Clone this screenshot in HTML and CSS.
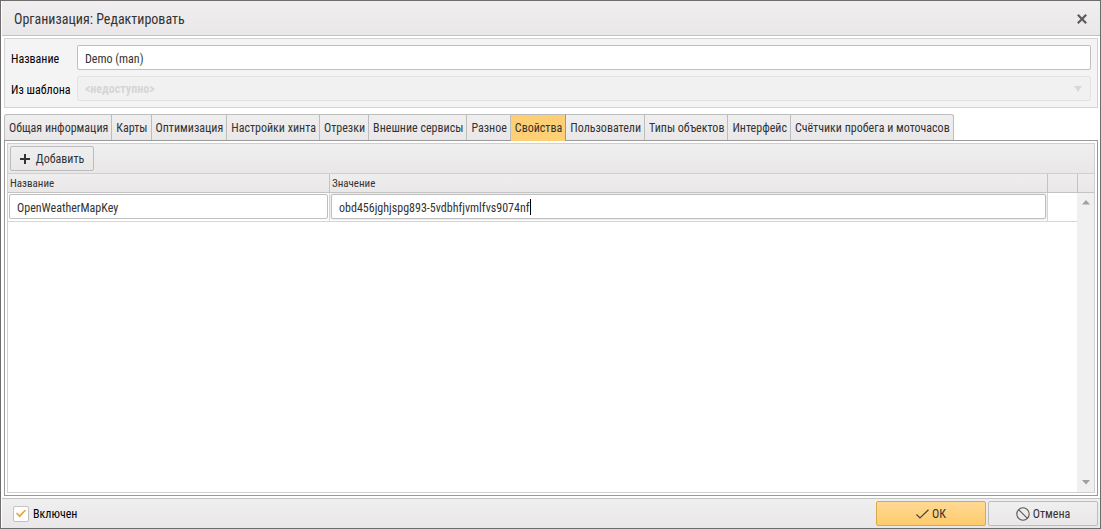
FILE: index.html
```html
<!DOCTYPE html>
<html lang="ru">
<head>
<meta charset="utf-8">
<title>Организация: Редактировать</title>
<link rel="stylesheet" href="styles.css">
</head>
<body>
<form class="dialog">
  <header class="titlebar">
    <h1 class="title">Организация: Редактировать</h1>
    <button type="button" class="close" aria-label="Закрыть">
      <svg width="10" height="10" viewBox="0 0 10 10"><path d="M.8 .8L9.2 9.2M9.2 .8L.8 9.2" stroke="#5c5c5c" stroke-width="2.2" fill="none"/></svg>
    </button>
  </header>
  <main class="content">
    <section class="fields">
      <label for="name">Название</label>
      <input id="name" class="input" type="text" value="Demo (man)">
      <label for="template">Из шаблона</label>
      <div class="select-wrap">
        <select id="template" class="input select" disabled><option>&lt;недоступно&gt;</option></select>
        <svg class="select-arrow" width="8" height="6" viewBox="0 0 8 6"><path d="M0 0H8L4 6Z" fill="#d8d8d8"/></svg>
      </div>
    </section>
    <nav class="tabs" role="tablist">
      <button type="button" class="tab" role="tab">Общая информация</button>
      <button type="button" class="tab" role="tab">Карты</button>
      <button type="button" class="tab" role="tab">Оптимизация</button>
      <button type="button" class="tab" role="tab">Настройки хинта</button>
      <button type="button" class="tab" role="tab">Отрезки</button>
      <button type="button" class="tab" role="tab">Внешние сервисы</button>
      <button type="button" class="tab" role="tab">Разное</button>
      <button type="button" class="tab active" role="tab" aria-selected="true">Свойства</button>
      <button type="button" class="tab" role="tab">Пользователи</button>
      <button type="button" class="tab" role="tab">Типы объектов</button>
      <button type="button" class="tab" role="tab">Интерфейс</button>
      <button type="button" class="tab" role="tab">Счётчики пробега и моточасов</button>
    </nav>
    <section class="tab-body">
      <div class="grid">
        <div class="toolbar">
          <button type="button" class="btn add">
            <svg width="10" height="10" viewBox="0 0 10 10"><path d="M5 0V10M0 5H10" stroke="#333" stroke-width="2"/></svg>
            Добавить
          </button>
        </div>
        <div class="grid-main">
          <div class="grid-view">
            <table class="table">
              <colgroup><col class="col-name"><col><col class="col-extra"></colgroup>
              <thead><tr><th id="h-name">Название</th><th id="h-value">Значение</th><th></th></tr></thead>
              <tbody><tr>
                <td><input class="input" type="text" aria-labelledby="h-name" value="OpenWeatherMapKey"></td>
                <td><div class="editor"><input id="value" class="input focused" type="text" aria-labelledby="h-value" value="obd456jghjspg893-5vdbhfjvmlfvs9074nf"><span id="caret" class="caret"></span></div></td>
                <td></td>
              </tr></tbody>
            </table>
          </div>
          <div class="scroll">
            <div class="scroll-head"></div>
            <div class="scroll-track">
              <svg width="8" height="5" viewBox="0 0 8 5"><path d="M4 0L8 4.5H0Z" fill="#a0a0a0"/></svg>
              <svg width="8" height="5" viewBox="0 0 8 5"><path d="M4 4.5L8 0H0Z" fill="#a0a0a0"/></svg>
            </div>
          </div>
        </div>
      </div>
    </section>
  </main>
  <footer class="footer">
    <label class="check"><input type="checkbox" checked><span>Включен</span></label>
    <div class="actions">
      <button type="button" class="btn primary">
        <svg width="13" height="10" viewBox="0 0 13 10"><path d="M.5 5.5L4 9L12.5 .7" fill="none" stroke="#444" stroke-width="1.2"/></svg>
        ОК
      </button>
      <button type="button" class="btn">
        <svg width="14" height="14" viewBox="0 0 14 14"><g fill="none" stroke="#555" stroke-width="1.1"><circle cx="7" cy="7" r="6.2"/><path d="M2.6 2.6L11.4 11.4"/></g></svg>
        Отмена
      </button>
    </div>
  </footer>
</form>
<script src="script.js"></script>
</body>
</html>
```
FILE: styles.css
```css
* { box-sizing: border-box; }
body {
  margin: 0;
  font-family: "Roboto Condensed", "Liberation Sans Narrow", Roboto, sans-serif;
  font-size: 12px;
  color: #333;
}
button, input, select { font: inherit; color: inherit; }
svg { display: block; flex: none; }
.dialog {
  display: flex;
  flex-direction: column;
  height: 100vh;
  border: 1px solid #6e6c6d;
  background: #fff;
  padding-left: 1px;
}
.titlebar {
  display: flex;
  align-items: center;
  justify-content: space-between;
  height: 35px;
  padding: 1px 13px 0 12px;
  border-bottom: 1px solid #c3c2c2;
  background: linear-gradient(#f0eeef, #e9e7e8);
}
.title { margin: 0; font-size: 14px; font-weight: 400; }
.close { padding: 0; border: 0; background: none; }
.content {
  flex: 1;
  display: flex;
  flex-direction: column;
  padding: 2px;
  min-height: 0;
}
.fields {
  display: grid;
  grid-template-columns: 66px 1fr;
  row-gap: 6px;
  align-items: center;
  padding: 6px;
  border: 1px solid #d3d3d3;
  background: #f4f4f4;
  color: #000;
}
.fields label { padding-top: 2px; }
.input {
  display: block;
  width: 100%;
  height: 25px;
  padding: 2px 7px 0;
  border: 1px solid #bfbfbf;
  border-radius: 2px;
  background: #fff;
  outline: none;
  color: #333;
}
.select-wrap { position: relative; }
.select {
  appearance: none;
  padding-top: 0;
  background: #f1f1f1;
  border-color: #e3e3e3;
  color: #d6d6d6;
  font-weight: 700;
  opacity: 1;
}
.select-arrow { position: absolute; right: 9px; top: 10px; }
.tabs {
  display: flex;
  margin-top: 6px;
}
.tab {
  height: 26px;
  padding: 0 3px 0 4px;
  border: 1px solid #bdbdbd;
  border-width: 1px 1px 0 0;
  background: linear-gradient(#f0eff0, #e9e7e8);
  white-space: nowrap;
}
.tab:first-child { border-left-width: 1px; border-top-left-radius: 3px; }
.tab:last-child { border-top-right-radius: 3px; }
.tab.active {
  height: 27px;
  margin-bottom: -1px;
  padding-bottom: 1px;
  background: #ffcf75;
  border-right-color: #999;
  z-index: 1;
}
.tab-body {
  flex: 1;
  display: flex;
  padding: 2px;
  border: 1px solid #999;
}
.grid {
  flex: 1;
  display: flex;
  flex-direction: column;
  border: 1px solid #d0d0d0;
}
.toolbar {
  padding: 2px;
  border-bottom: 1px solid #d0d0d0;
  background: linear-gradient(#f0eff0, #e9e7e8);
}
.btn {
  display: flex;
  align-items: center;
  justify-content: center;
  gap: 3px;
  width: 110px;
  height: 25px;
  padding: 0;
  border: 1px solid #bcbcbc;
  border-radius: 2px;
  background: linear-gradient(#f0eff0, #e9e7e8);
}
.btn.add { width: 84px; gap: 6px; }
.btn.primary { background: linear-gradient(#ffd994, #ffcb6c); border-color: #d9a94f; }
.grid-main { flex: 1; display: flex; }
.grid-view { flex: 1; }
.table { width: 100%; border-spacing: 0; table-layout: fixed; }
.table th {
  height: 19px;
  padding: 0 2px;
  border: 1px solid #c3c3c3;
  border-width: 0 1px 1px 0;
  background: linear-gradient(#efeeef, #e9e7e8);
  font-size: 11px;
  font-weight: 400;
  text-align: left;
}
.table td { height: 29px; padding: 1px 1px 2px; border: 1px solid #d6d6d6; border-width: 0 1px 1px 0; }
.table th:last-child, .table td:last-child { border-right: 0; }
.col-name { width: 322px; }
.col-extra { width: 29px; }
.editor { position: relative; }
.focused { box-shadow: 0 0 2px #bbb; caret-color: transparent; }
.caret { position: absolute; top: 5px; width: 1px; height: 16px; background: #000; }
.scroll { display: flex; flex-direction: column; width: 17px; }
.scroll-head {
  height: 19px;
  border: 1px solid #c3c3c3;
  border-width: 0 0 1px 1px;
  background: linear-gradient(#efeeef, #e9e7e8);
}
.scroll-track {
  flex: 1;
  display: flex;
  flex-direction: column;
  align-items: center;
  justify-content: space-between;
  padding: 7px 0;
  background: #f0f0f0;
}
.footer {
  display: flex;
  align-items: center;
  justify-content: space-between;
  height: 30px;
  padding: 0 2px 0 11px;
  border-top: 1px solid #c3c2c2;
  background: linear-gradient(#f0eff0, #e9e7e8);
}
.check { display: flex; align-items: center; gap: 4px; color: #000; }
.check input {
  appearance: none;
  width: 16px;
  height: 16px;
  margin: 0;
  border: 1px solid #c2c2c2;
  border-radius: 2px;
  background: #fff;
  display: grid;
  place-items: center;
}
.check input:checked::before {
  content: "";
  width: 10px;
  height: 8px;
  background: #e2a42c;
  clip-path: polygon(0 50%, 11% 36%, 36% 70%, 90% 0, 100% 12%, 37% 100%);
}
.actions { display: flex; gap: 2px; }
```
FILE: script.js
```js
// Keeps a steady text cursor after the last character of the edited value.
const field = document.getElementById('value');
const caret = document.getElementById('caret');
const measure = document.createElement('canvas').getContext('2d');

function placeCaret() {
  const style = getComputedStyle(field);
  measure.font = `${style.fontSize} ${style.fontFamily}`;
  const start = parseFloat(style.paddingLeft) + parseFloat(style.borderLeftWidth);
  const end = field.selectionEnd;
  caret.style.left = `${Math.round(start + measure.measureText(field.value.slice(0, end)).width)}px`;
}

field.focus();
field.setSelectionRange(field.value.length, field.value.length);
placeCaret();
field.addEventListener('input', placeCaret);
field.addEventListener('keyup', placeCaret);
field.addEventListener('click', placeCaret);
```
